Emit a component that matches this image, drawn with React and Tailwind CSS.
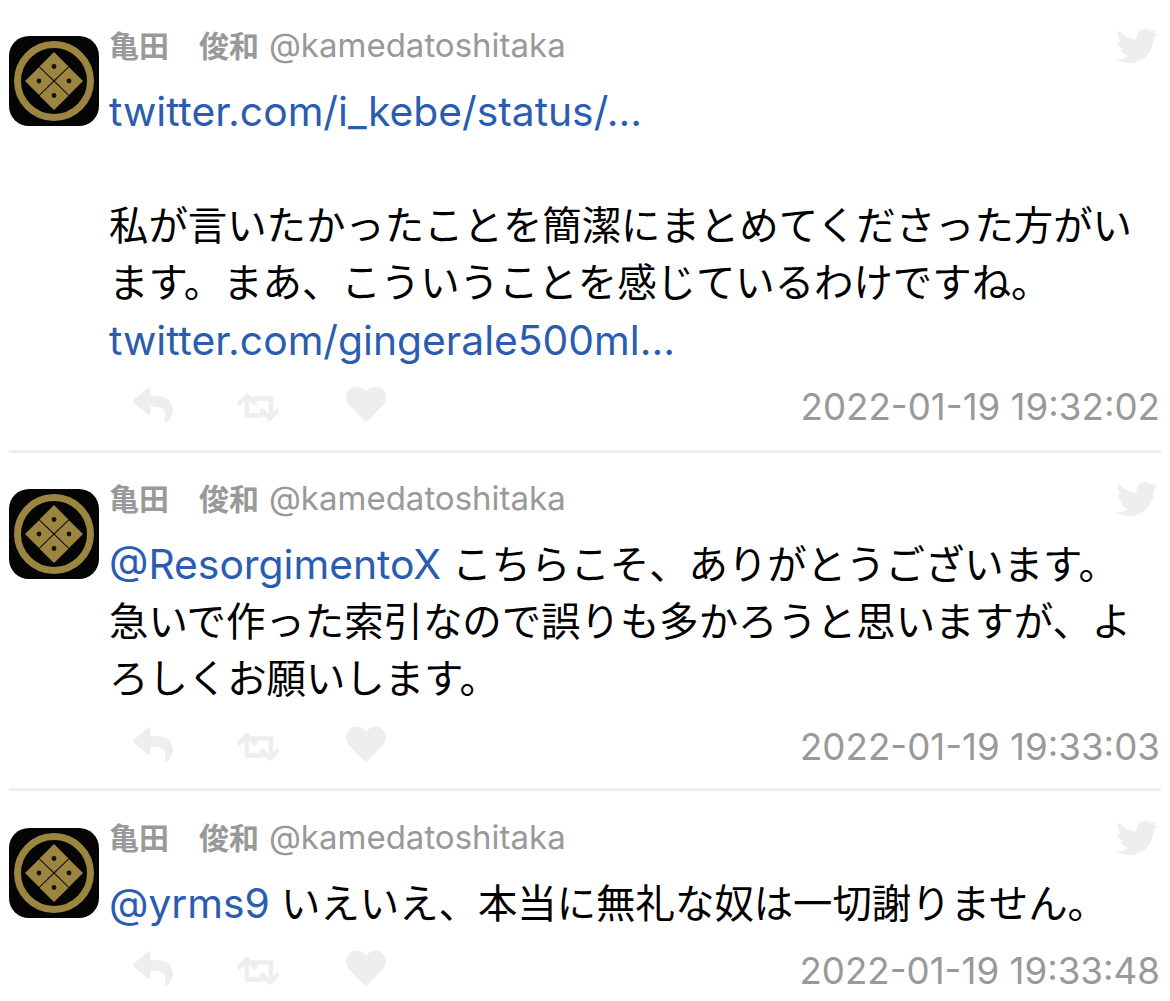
import React from "react";
import { FaTwitter, FaReply, FaHeart } from "react-icons/fa";

function Avatar() {
  return (
    <div className="w-[90px] h-[90px] rounded-[20px] bg-[#050505] shrink-0 flex items-center justify-center">
      <svg width="90" height="90" viewBox="0 0 90 90">
        <circle cx="45" cy="45" r="36.5" fill="none" stroke="#9c8540" strokeWidth="7" />
        <g fill="#9c8540">
          <polygon points="45,16 59.5,30.5 45,44.3 30.5,30.5" />
          <polygon points="45.8,45 60,31.2 74,45 60,59" />
          <polygon points="44.2,45 30,31.2 16,45 30,59" />
          <polygon points="45,45.8 59.5,59.7 45,74 30.5,59.7" />
        </g>
        <g fill="#151208">
          <circle cx="45" cy="30.5" r="2.4" />
          <circle cx="60" cy="45" r="2.4" />
          <circle cx="30" cy="45" r="2.4" />
          <circle cx="45" cy="59.5" r="2.4" />
        </g>
      </svg>
    </div>
  );
}

function Retweet() {
  return (
    <svg width="42" height="28" viewBox="0 0 42 28" fill="none" stroke="#eeeeee" strokeWidth="4.5">
      <path d="M10 24V3" />
      <path d="M1 11.5L10 2.5l9 9" />
      <path d="M8 22.5h18" />
      <path d="M15 5.5h19v20" />
      <path d="M23.5 16.5l9.5 9 8.5-9" />
    </svg>
  );
}

function L({ children }) {
  return <span className="text-[#2a5db0] text-[40.8px]">{children}</span>;
}

function Tweet({ time, body, border, bodyPad, actionsPad }) {
  return (
    <div className={border ? "border-b-[3px] border-[#eeeeee]" : ""}>
      <div className="flex">
        <div className="pt-[10px] w-[100px] shrink-0">
          <Avatar />
        </div>
        <div className="flex-1 min-w-0">
          <div className="flex items-start justify-between h-[38px]">
            <div className="text-[30px] leading-[38px] text-[#999999] whitespace-nowrap">
              <span className="font-bold">亀田　俊和</span>
              <span className="ml-[10px] text-[33px]">@kamedatoshitaka</span>
            </div>
            <FaTwitter className="text-[#eeeeee] text-[42px] mt-[-1px] mr-[3px]" />
          </div>
          <div className={`text-[39.4px] leading-[57px] text-black whitespace-pre-line ${bodyPad}`}>{body}</div>
          <div className={`flex items-center justify-between ${actionsPad}`}>
            <div className="flex items-center">
              <FaReply className="text-[#eeeeee] w-[44px] h-[40px] ml-[22px] mt-[-4px]" />
              <div className="ml-[62px]"><Retweet /></div>
              <FaHeart className="text-[#eeeeee] w-[40px] h-[40px] ml-[67px] mt-[-6px]" />
            </div>
            <div className="text-[36.7px] leading-[44px] text-[#999999] whitespace-nowrap mr-[1px]">{time}</div>
          </div>
        </div>
      </div>
    </div>
  );
}

export default function App() {
  return (
    <div
      className="w-[1170px] h-[1001px] overflow-hidden bg-white pl-[9px] pr-[9px] pt-[26px]"
      style={{ fontFamily: 'Inter, "Noto Sans CJK JP", sans-serif' }}
    >
      <Tweet
        border
        bodyPad="pt-[19px]"
        actionsPad="pt-[15px] pb-[21px]"
        time="2022-01-19 19:32:02"
        body={
          <>
            <L>twitter.com/i_kebe/status/…</L>
            {"\n\n私が言いたかったことを簡潔にまとめてくださった方がい\nます。まあ、こういうことを感じているわけですね。\n"}
            <L>twitter.com/gingerale500ml…</L>
          </>
        }
      />
      <div className="h-[26px]" />
      <Tweet
        border
        bodyPad="pt-[19px]"
        actionsPad="pt-[17px] pb-[19px]"
        time="2022-01-19 19:33:03"
        body={
          <>
            <L>@ResorgimentoX</L>
            {" こちらこそ、ありがとうございます。\n急いで作った索引なので誤りも多かろうと思いますが、よ\nろしくお願いします。"}
          </>
        }
      />
      <div className="h-[27px]" />
      <Tweet
        bodyPad="pt-[19px]"
        actionsPad="pt-[16px] pb-[20px]"
        time="2022-01-19 19:33:48"
        body={
          <>
            <L>@yrms9</L>
            {" いえいえ、本当に無礼な奴は一切謝りません。"}
          </>
        }
      />
    </div>
  );
}
